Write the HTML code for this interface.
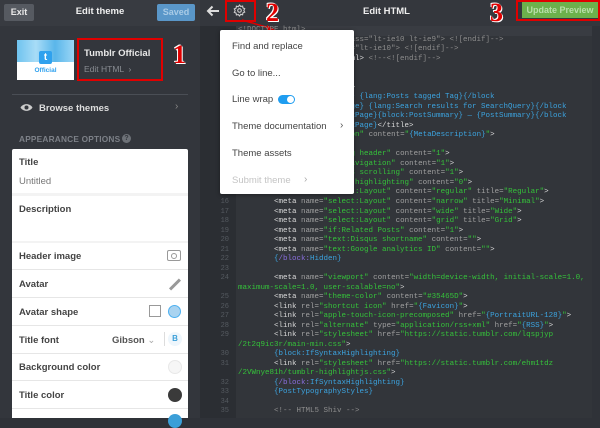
<!DOCTYPE html>
<html><head><meta charset="utf-8"><style>
*{margin:0;padding:0;box-sizing:border-box}
body{width:600px;height:418px;overflow:hidden;background:#2f3238;font-family:"Liberation Sans",sans-serif;position:relative}
.a{position:absolute}
#lp{left:0;top:0;width:200px;height:418px;background:#33363c}
#lh{left:0;top:0;width:200px;height:26px;background:#383b41}
#rh{left:200px;top:0;width:400px;height:26px;background:#34373d}
#gut{left:200px;top:26px;width:36px;height:392px;background:#2b2e33}
#code{left:236px;top:26px;width:356px;height:392px;background:#32353a}
.cl{position:absolute;left:238px;font-family:"Liberation Mono",monospace;font-size:7.5px;white-space:pre;color:#dadada;line-height:9px}
.ln{position:absolute;left:200px;width:29px;text-align:right;font-family:"Liberation Mono",monospace;font-size:7px;color:#555a60;line-height:9px}
.n{color:#a0a0a0}.s{color:#35c23a}.v{color:#3ca4e0}.b{color:#8b6fe0}.c{color:#8d8d8d}
.row{position:absolute;left:12px;width:176px;border-top:1px solid #e6e6e6;font-size:9px;font-weight:bold;color:#444}
.lb{position:absolute;left:19px;font-size:9.5px;font-weight:bold;color:#444}
.mi{position:absolute;left:232px;font-size:9.5px;color:#444}
.red{position:absolute;border:2px solid #e00000}
.num{position:absolute;color:#e00000;font-family:"Liberation Serif",serif;font-weight:bold;font-size:26px;text-shadow:0 0 1px #fff,1px 1px 0 #fff,-1px -1px 0 #fff}
</style></head><body>
<div id="lp" class="a"></div>
<div id="lh" class="a"></div>
<div id="rh" class="a"></div>
<div id="gut" class="a"></div>
<div id="code" class="a"></div>
<div class="a" style="left:236px;top:26px;width:356px;height:10px;background:#393c42"></div>

<div class="a" style="left:4px;top:4px;width:30px;height:17px;background:#565a61;border-radius:2px;color:#e8e8e8;font-size:9px;font-weight:bold;text-align:center;line-height:17px">Exit</div>
<div class="a" style="left:0;top:6px;width:200px;text-align:center;color:#f0f0f0;font-size:9.5px;font-weight:bold">Edit theme</div>
<div class="a" style="left:157px;top:4px;width:38px;height:17px;background:#5a97c9;border-radius:2px;color:#a9cbe6;font-size:9px;font-weight:bold;text-align:center;line-height:17px">Saved</div>

<div class="a" style="left:17px;top:40px;width:57px;height:40px;background:#fff;overflow:hidden">
 <div style="height:22px;background:linear-gradient(90deg,#6fc3ef,#a8dcf7,#5ab6ea,#9ad6f6)"></div>
 <div class="a" style="left:22px;top:11px;width:13px;height:13px;background:#2fa1ee;border-radius:2px;color:#fff;font-size:10px;font-weight:bold;text-align:center;line-height:13px">t</div>
 <div class="a" style="left:0;top:27px;width:57px;text-align:center;color:#2fa1ee;font-size:6.5px;font-weight:bold">Official</div>
</div>
<div class="a" style="left:84px;top:48px;color:#e8e8e8;font-size:9.5px;font-weight:bold">Tumblr Official</div>
<div class="a" style="left:84px;top:64px;color:#888c92;font-size:8.5px">Edit HTML &nbsp;›</div>
<div class="red" style="left:77px;top:38px;width:86px;height:43px"></div>
<div class="num" style="left:173px;top:40px">1</div>

<div class="a" style="left:12px;top:94px;width:176px;height:1px;background:#4a4e55"></div>
<svg class="a" style="left:20px;top:103px" width="13" height="9" viewBox="0 0 13 9"><path d="M0.5 4.5C3 0 10 0 12.5 4.5C10 9 3 9 0.5 4.5Z" fill="#ccc"/><circle cx="6.5" cy="4.5" r="2" fill="#33363c"/></svg>
<div class="a" style="left:39px;top:103px;color:#ddd;font-size:9.5px;font-weight:bold">Browse themes</div>
<div class="a" style="left:175px;top:101px;color:#888;font-size:10px">›</div>
<div class="a" style="left:19px;top:134px;color:#7d8188;font-size:8.3px;font-weight:bold;letter-spacing:.2px">APPEARANCE OPTIONS</div>
<div class="a" style="left:122px;top:134px;width:9px;height:9px;border-radius:50%;background:#6d7177;color:#33363c;font-size:7px;text-align:center;line-height:9px;font-weight:bold">?</div>

<div class="a" style="left:12px;top:149px;width:176px;height:269px;background:#fff;border-radius:2px 2px 0 0"></div>
<div class="lb" style="top:157px">Title</div>
<div class="a" style="left:19px;top:176px;font-size:9.5px;color:#777">Untitled</div>
<div class="row" style="top:193px;height:3px;background:#f3f3f3;border:0"></div>
<div class="lb" style="top:204px">Description</div>
<div class="row" style="top:241px;height:2px;background:#f3f3f3;border:0"></div>
<div class="lb" style="top:251px">Header image</div>
<div class="a" style="left:167px;top:250px;width:14px;height:11px;border:1.5px solid #999;border-radius:2px"></div>
<div class="a" style="left:171px;top:253px;width:6px;height:6px;border:1.5px solid #999;border-radius:50%"></div>
<div class="row" style="top:269px"></div>
<div class="lb" style="top:279px">Avatar</div>
<div class="a" style="left:168px;top:283px;width:14px;height:3px;background:#999;transform:rotate(-45deg)"></div>
<div class="row" style="top:297px"></div>
<div class="lb" style="top:307px">Avatar shape</div>
<div class="a" style="left:149px;top:305px;width:12px;height:12px;border:1.5px solid #999"></div>
<div class="a" style="left:168px;top:305px;width:13px;height:13px;border-radius:50%;background:#a9d3f0;border:1.5px solid #4db0f0"></div>
<div class="row" style="top:325px"></div>
<div class="lb" style="top:335px">Title font</div>
<div class="a" style="left:112px;top:335px;font-size:9.5px;font-weight:bold;color:#555">Gibson <span style="color:#aaa;font-weight:normal">⌄</span></div>
<div class="a" style="left:164px;top:332px;width:1px;height:14px;background:#ddd"></div>
<div class="a" style="left:168px;top:332px;width:14px;height:14px;border-radius:50%;background:#eef6fc;color:#3b9fd8;font-size:8px;font-weight:bold;text-align:center;line-height:14px">B</div>
<div class="row" style="top:353px"></div>
<div class="lb" style="top:362px">Background color</div>
<div class="a" style="left:168px;top:360px;width:14px;height:14px;border-radius:50%;background:#f6f6f6;border:1px solid #e8e8e8"></div>
<div class="row" style="top:380px"></div>
<div class="lb" style="top:390px">Title color</div>
<div class="a" style="left:168px;top:388px;width:14px;height:14px;border-radius:50%;background:#3a3a3a"></div>
<div class="row" style="top:408px"></div>
<div class="a" style="left:168px;top:414px;width:14px;height:14px;border-radius:50%;background:#3b9fd8"></div>

<svg class="a" style="left:206px;top:5px" width="14" height="12" viewBox="0 0 14 12"><path d="M13 6H2M6.5 1.5L2 6l4.5 4.5" stroke="#ddd" stroke-width="2" fill="none"/></svg>
<svg class="a" style="left:233px;top:4px" width="13" height="13" viewBox="0 0 13 13"><path d="M6.5 1l1.2 1.5 1.9-.5.3 1.9 1.8.8-.9 1.7.9 1.7-1.8.8-.3 1.9-1.9-.5L6.5 12 5.3 10.5l-1.9.5-.3-1.9-1.8-.8.9-1.7-.9-1.7 1.8-.8.3-1.9 1.9.5z" fill="none" stroke="#ccc" stroke-width="1.1"/><circle cx="6.5" cy="6.5" r="1.8" fill="none" stroke="#ccc" stroke-width="1.1"/></svg>
<div class="red" style="left:225px;top:0;width:31px;height:22px"></div>
<div class="num" style="left:266px;top:-2px">2</div>
<svg class="a" style="left:240px;top:18px" width="40" height="14"><path d="M2 2L33 11" stroke="#e00000" stroke-width="1.5"/><path d="M27 7L35 12L27 13Z" fill="#e00000"/></svg>
<div class="a" style="left:363px;top:6px;color:#eee;font-size:9.5px;font-weight:bold">Edit HTML</div>
<div class="num" style="left:490px;top:-2px">3</div>
<div class="a" style="left:522px;top:2px;width:76px;height:16px;background:#6cb14c;color:#b9deaa;font-size:9px;font-weight:bold;text-align:center;line-height:16px">Update Preview</div>
<div class="red" style="left:516px;top:0;width:84px;height:21px"></div>

<div class="cl c" style="top:26px">&lt;!DOCTYPE html&gt;</div>
<div class="cl c" style="top:36px">&lt;!--[if lt IE 9]&gt;&lt;html class="lt-ie10 lt-ie9"&gt; &lt;![endif]--&gt;</div>
<div class="cl c" style="top:45px">&lt;!--[if IE 9]&gt;&lt;html class="lt-ie10"&gt; &lt;![endif]--&gt;</div>
<div class="cl c" style="top:55px">&lt;!--[if gt IE 9]&gt;&lt;!--&gt;&lt;ht<span style="color:#ddd">ml&gt;</span> &lt;!--&lt;![endif]--&gt;</div>
<div class="cl" style="top:84px">    &lt;meta charset=<span class="s">"utf-8"</span>&gt;</div>
<div class="cl" style="top:93px">    &lt;title&gt;<span class="v">{block:TagPage} {lang:Posts tagged Tag}{/block</span></div>
<div class="cl" style="top:103px"><span class="v">          {block:SearchPage} {lang:Search results for SearchQuery}{/block</span></div>
<div class="cl" style="top:112px"><span class="v">          {block:PermalinkPage}{block:PostSummary} — {PostSummary}{/block</span></div>
<div class="cl" style="top:122px"><span class="v">          {block:PermalinkPage}</span>&lt;/title&gt;</div>
<div class="cl" style="top:131px">    &lt;meta <span class="n">name=</span><span class="s">"description"</span> <span class="n">content=</span><span class="s">"</span><span class="v">{MetaDescription}</span><span class="s">"</span>&gt;</div>
<div class="cl" style="top:150px">    &lt;meta <span class="n">name=</span><span class="s">"if:Sliding header"</span> <span class="n">content=</span><span class="s">"1"</span>&gt;</div>
<div class="cl" style="top:160px">    &lt;meta <span class="n">name=</span><span class="s">"if:Show navigation"</span> <span class="n">content=</span><span class="s">"1"</span>&gt;</div>
<div class="cl" style="top:169px">    &lt;meta <span class="n">name=</span><span class="s">"if:Endless scrolling"</span> <span class="n">content=</span><span class="s">"1"</span>&gt;</div>
<div class="cl" style="top:179px">    &lt;meta <span class="n">name=</span><span class="s">"if:Syntax highlighting"</span> <span class="n">content=</span><span class="s">"0"</span>&gt;</div>
<div class="cl" style="top:188px">        &lt;meta <span class="n">name=</span><span class="s">"select:Layout"</span> <span class="n">content=</span><span class="s">"regular"</span> <span class="n">title=</span><span class="s">"Regular"</span>&gt;</div>
<div class="cl" style="top:198px">        &lt;meta <span class="n">name=</span><span class="s">"select:Layout"</span> <span class="n">content=</span><span class="s">"narrow"</span> <span class="n">title=</span><span class="s">"Minimal"</span>&gt;</div>
<div class="cl" style="top:208px">        &lt;meta <span class="n">name=</span><span class="s">"select:Layout"</span> <span class="n">content=</span><span class="s">"wide"</span> <span class="n">title=</span><span class="s">"Wide"</span>&gt;</div>
<div class="cl" style="top:217px">        &lt;meta <span class="n">name=</span><span class="s">"select:Layout"</span> <span class="n">content=</span><span class="s">"grid"</span> <span class="n">title=</span><span class="s">"Grid"</span>&gt;</div>
<div class="cl" style="top:227px">        &lt;meta <span class="n">name=</span><span class="s">"if:Related Posts"</span> <span class="n">content=</span><span class="s">"1"</span>&gt;</div>
<div class="cl" style="top:236px">        &lt;meta <span class="n">name=</span><span class="s">"text:Disqus shortname"</span> <span class="n">content=</span><span class="s">""</span>&gt;</div>
<div class="cl" style="top:246px">        &lt;meta <span class="n">name=</span><span class="s">"text:Google analytics ID"</span> <span class="n">content=</span><span class="s">""</span>&gt;</div>
<div class="cl" style="top:255px">        <span class="v">{</span><span class="b">/block:</span><span class="v">Hidden}</span></div>
<div class="cl" style="top:274px">        &lt;meta <span class="n">name=</span><span class="s">"viewport"</span> <span class="n">content=</span><span class="s">"width=device-width, initial-scale=1.0,</span></div>
<div class="cl s" style="top:284px">maximum-scale=1.0, user-scalable=no"<span style="color:#d0d0d0">&gt;</span></div>
<div class="cl" style="top:293px">        &lt;meta <span class="n">name=</span><span class="s">"theme-color"</span> <span class="n">content=</span><span class="s">"#35465D"</span>&gt;</div>
<div class="cl" style="top:303px">        &lt;link <span class="n">rel=</span><span class="s">"shortcut icon"</span> <span class="n">href=</span><span class="s">"</span><span class="v">{Favicon}</span><span class="s">"</span>&gt;</div>
<div class="cl" style="top:312px">        &lt;link <span class="n">rel=</span><span class="s">"apple-touch-icon-precomposed"</span> <span class="n">href=</span><span class="s">"</span><span class="v">{PortraitURL-128}</span><span class="s">"</span>&gt;</div>
<div class="cl" style="top:322px">        &lt;link <span class="n">rel=</span><span class="s">"alternate"</span> <span class="n">type=</span><span class="s">"application/rss+xml"</span> <span class="n">href=</span><span class="s">"</span><span class="v">{RSS}</span><span class="s">"</span>&gt;</div>
<div class="cl" style="top:331px">        &lt;link <span class="n">rel=</span><span class="s">"stylesheet"</span> <span class="n">href=</span><span class="s">"https://static.tumblr.com/lqspjyp</span></div>
<div class="cl s" style="top:341px">/2t2q9ic3r/main-min.css"<span style="color:#d0d0d0">&gt;</span></div>
<div class="cl v" style="top:350px">        {block:IfSyntaxHighlighting}</div>
<div class="cl" style="top:360px">        &lt;link <span class="n">rel=</span><span class="s">"stylesheet"</span> <span class="n">href=</span><span class="s">"https://static.tumblr.com/ehm1tdz</span></div>
<div class="cl s" style="top:369px">/2VWnye81h/tumblr-highlightjs.css"<span style="color:#d0d0d0">&gt;</span></div>
<div class="cl" style="top:379px">        <span class="v">{</span><span class="b">/block:</span><span class="v">IfSyntaxHighlighting}</span></div>
<div class="cl v" style="top:388px">        {PostTypographyStyles}</div>
<div class="cl c" style="top:407px">        &lt;!-- HTML5 Shiv --&gt;</div>

<div class="ln" style="top:188px">15</div><div class="ln" style="top:198px">16</div><div class="ln" style="top:208px">17</div><div class="ln" style="top:217px">18</div><div class="ln" style="top:227px">19</div><div class="ln" style="top:236px">20</div><div class="ln" style="top:246px">21</div><div class="ln" style="top:255px">22</div><div class="ln" style="top:265px">23</div><div class="ln" style="top:274px">24</div><div class="ln" style="top:293px">25</div><div class="ln" style="top:303px">26</div><div class="ln" style="top:312px">27</div><div class="ln" style="top:322px">28</div><div class="ln" style="top:331px">29</div><div class="ln" style="top:350px">30</div><div class="ln" style="top:360px">31</div><div class="ln" style="top:379px">32</div><div class="ln" style="top:388px">33</div><div class="ln" style="top:398px">34</div><div class="ln" style="top:407px">35</div>

<div class="a" style="left:220px;top:30px;width:134px;height:164px;background:#fff;border-radius:2px;box-shadow:0 1px 4px rgba(0,0,0,.4)"></div>
<div class="mi" style="top:41px">Find and replace</div>
<div class="mi" style="top:68px">Go to line...</div>
<div class="mi" style="top:94px">Line wrap</div>
<div class="a" style="left:278px;top:95px;width:17px;height:9px;border-radius:5px;background:#1f9df0"></div>
<div class="a" style="left:287px;top:96px;width:7px;height:7px;border-radius:50%;background:#fff"></div>
<div class="mi" style="top:121px">Theme documentation</div>
<div class="a" style="left:340px;top:120px;font-size:10px;color:#555">›</div>
<div class="mi" style="top:148px">Theme assets</div>
<div class="mi" style="top:175px;color:#c4c4c4">Submit theme</div>
<div class="a" style="left:304px;top:174px;font-size:10px;color:#aaa">›</div>
</body></html>
